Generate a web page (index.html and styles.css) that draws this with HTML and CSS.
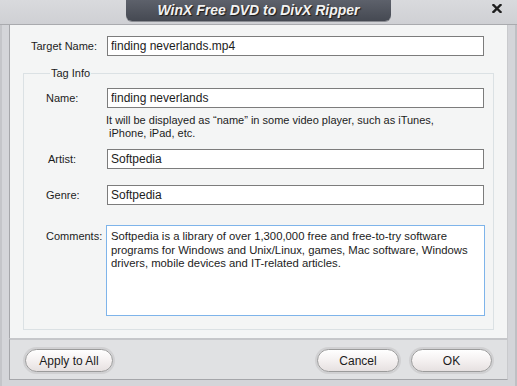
FILE: index.html
```html
<!DOCTYPE html>
<html lang="en">
<head>
    <meta charset="UTF-8">
    <title>WinX Free DVD to DivX Ripper</title>
    <link rel="stylesheet" href="styles.css">
</head>
<body>
    <div class="window">
        <!-- Title bar -->
        <div class="titlebar">
            <span></span>
            <div class="title-tab">WinX Free DVD to DivX Ripper</div>
            <span class="close">
                <svg width="10" height="9" viewBox="0 0 10 9">
                    <path d="M1.5 1 L8.5 8 M8.5 1 L1.5 8" stroke="#1e1e1e" stroke-width="2.4" stroke-linecap="square"/>
                </svg>
            </span>
        </div>

        <div class="frame">
            <div class="content">
                <div class="row target-row">
                    <label class="label">Target Name:</label>
                    <input class="field" type="text" value="finding neverlands.mp4">
                </div>

                <fieldset class="tag-info">
                    <legend>Tag Info</legend>

                    <div class="row">
                        <label class="label">Name:</label>
                        <input class="field" type="text" value="finding neverlands">
                    </div>
                    <p class="hint">It will be displayed as “name” in some video player, such as iTunes,<br>&nbsp;iPhone, iPad, etc.</p>

                    <div class="row artist-row">
                        <label class="label artist">Artist:</label>
                        <input class="field" type="text" value="Softpedia">
                    </div>

                    <div class="row genre-row">
                        <label class="label">Genre:</label>
                        <input class="field" type="text" value="Softpedia">
                    </div>

                    <div class="row comments-row">
                        <label class="label">Comments:</label>
                        <textarea class="comments">Softpedia is a library of over 1,300,000 free and free-to-try software
programs for Windows and Unix/Linux, games, Mac software, Windows
drivers, mobile devices and IT-related articles.</textarea>
                    </div>
                </fieldset>
            </div>

            <!-- Button bar -->
            <div class="footer">
                <button class="btn btn-apply">Apply to All</button>
                <span class="spacer"></span>
                <button class="btn btn-cancel">Cancel</button>
                <button class="btn btn-ok">OK</button>
            </div>
        </div>
    </div>
</body>
</html>
```

FILE: styles.css
```css
body {
    margin: 0;
    background-color: #d4d5d9;
    font-family: "Liberation Sans", Arial, sans-serif;
    font-size: 11px;
    color: #1c1c1c;
}

.window {
    width: 517px;
    height: 386px;
    background-color: #d4d5d9;
    overflow: hidden;
}

/* Title bar with the dark tab in the middle */
.titlebar {
    height: 25px;
    display: grid;
    grid-template-columns: 1fr 265px 1fr;
    background: linear-gradient(#d9dadd, #cfd0d4);
    border-bottom: 1px solid #a9aaae;
    box-sizing: border-box;
}

.title-tab {
    height: 21px;
    background: linear-gradient(#5d616b, #454952);
    border-radius: 0 0 6px 6px;
    color: #f2f2f2;
    font-weight: bold;
    font-style: italic;
    font-size: 14px;
    line-height: 21px;
    text-align: center;
    text-shadow: 1px 1px 1px #1a1a1a;
    box-shadow: 0 1px 0 #8c8e94;
}

.close {
    justify-self: end;
    padding: 3px 15px 0 0;
}

/* Window frame */
.frame {
    height: 361px;
    padding: 0 7px 0 7px;
    border-left: 2px solid #c4c5c9;
    border-right: 2px solid #bfc0c4;
    box-sizing: border-box;
}

.content {
    height: 313px;
    background-color: #f4f5f5;
    border-left: 1px solid #a5a6aa;
    border-right: 1px solid #c9cacd;
    padding: 11px 23px 0 14px;
    box-sizing: border-box;
}

.row {
    display: flex;
    align-items: center;
}

.label {
    width: 76px;
    flex-shrink: 0;
}

.target-row {
    padding-left: 7px;
}

.field {
    flex: 1;
    height: 20px;
    margin: 0;
    padding: 0 3px;
    border: 1px solid #7c7c7c;
    background-color: #ffffff;
    font-family: inherit;
    font-size: 12px;
    color: #1c1c1c;
    box-sizing: border-box;
    outline: none;
}

/* Tag Info group */
.tag-info {
    margin: 10px -10px 0 -1px;
    padding: 8px 9px 13px 22px;
    border: 1px solid #dbe1e4;
    box-sizing: border-box;
}

.tag-info legend {
    padding: 0 1px;
    margin-left: 4px;
    font-size: 11px;
    line-height: 14px;
}

.tag-info .label {
    width: 61px;
}

.label.artist {
    padding-left: 2px;
    width: 59px;
}

.hint {
    margin: 6px 0 0 -1px;
    padding-left: 61px;
    line-height: 13px;
    font-size: 11px;
}

.artist-row {
    margin-top: 9px;
}

.genre-row {
    margin-top: 16px;
}

.comments-row {
    margin-top: 20px;
    align-items: flex-start;
}

.comments-row .label {
    padding-top: 5px;
}

.comments {
    flex: 1;
    height: 91px;
    margin: 0 -1px 0 -1px;
    padding: 4px 4px;
    border: 1px solid #7eb4ea;
    background-color: #ffffff;
    font-family: inherit;
    font-size: 11.3px;
    line-height: 13.5px;
    color: #1c1c1c;
    resize: none;
    box-sizing: border-box;
    outline: none;
}

/* Bottom button bar */
.footer {
    height: 42px;
    display: flex;
    align-items: center;
    gap: 12px;
    padding: 2px 15px 0 15px;
    background-color: #e0e1e3;
    border-top: 2px solid #c6c7ca;
    border-bottom: 1px solid #a5a6aa;
    border-left: 1px solid #a5a6aa;
    border-right: 1px solid #c9cacd;
    box-sizing: border-box;
}

.spacer {
    flex: 1;
}

.btn {
    height: 23px;
    border: 1px solid #9b9b9b;
    border-radius: 12px;
    background: linear-gradient(#ffffff, #f3efef 55%, #e6e1e1);
    box-shadow: 0 0 0 2px #d0d0d2;
    font-family: inherit;
    font-size: 12px;
    color: #1c1c1c;
    padding: 0;
}

.btn-apply {
    width: 88px;
}

.btn-cancel {
    width: 82px;
}

.btn-ok {
    width: 81px;
}
```
